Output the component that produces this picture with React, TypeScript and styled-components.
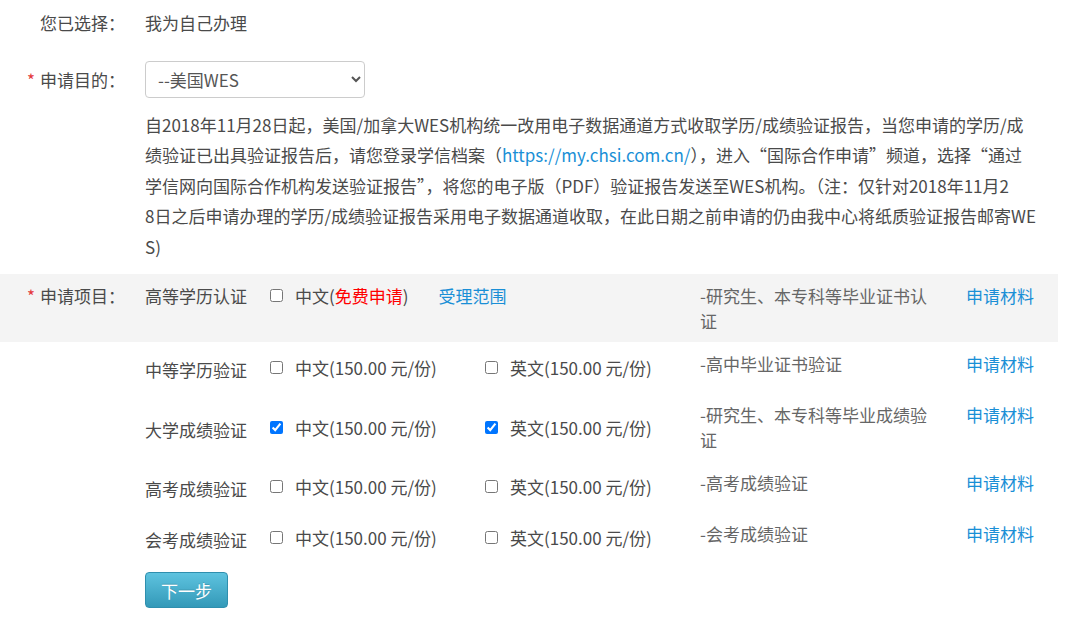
import React, { FC } from 'react';
import styled, { createGlobalStyle } from 'styled-components';

const GlobalStyle = createGlobalStyle`
  body {
    margin: 0;
    background: #fff;
    font-family: "Noto Sans CJK SC", "Liberation Sans", sans-serif;
    font-size: 17px;
    color: #4a4a4a;
  }
`;

const Page = styled.div`
  width: 1058px;
  padding-top: 10px;
`;

const FormLine = styled.div<{ $center?: boolean }>`
  display: grid;
  grid-template-columns: 145px 1fr;
  align-items: ${p => (p.$center ? 'center' : 'start')};
  line-height: 25px;
  margin-bottom: ${p => (p.$center ? '0' : '26px')};
`;

const Label = styled.div<{ $required?: boolean }>`
  padding-left: ${p => (p.$required ? '27px' : '40px')};
  color: #4a4a4a;
  white-space: nowrap;
`;

const Star = styled.span`
  display: inline-block;
  width: 13px;
  color: #e4393c;
`;

const Select = styled.select`
  width: 220px;
  height: 37px;
  padding: 0 8px;
  border: 1px solid #ccc;
  border-radius: 4px;
  background: #fff;
  color: #555;
  font: inherit;
  font-size: 17px;
`;

const Notice = styled.p`
  margin: 12px 0 12px 145px;
  line-height: 30.4px;
  color: #4a4a4a;
  white-space: nowrap;
`;

const Link = styled.a`
  color: #1a8fd6;
  text-decoration: none;
`;

const ItemRow = styled.div<{ $shaded?: boolean }>`
  display: grid;
  grid-template-columns: 145px 125px 215px 215px 266px 92px;
  grid-auto-rows: minmax(33px, auto);
  align-items: ${p => (p.$shaded ? 'start' : 'center')};
  padding: 9px 0;
  line-height: 25px;
  background: ${p => (p.$shaded ? '#f4f4f4' : 'transparent')};
`;

const ItemName = styled.div<{ $low?: boolean }>`
  padding-top: ${p => (p.$low ? '4px' : '0')};
  color: #4a4a4a;
  white-space: nowrap;
`;

const Option = styled.label`
  display: flex;
  align-items: center;
  gap: 12px;
  color: #4a4a4a;
  white-space: nowrap;
`;

const Box = styled.input`
  margin: 0;
  width: 13px;
  height: 13px;
`;

const Free = styled.span`
  color: #f00;
`;

const ScopeLink = styled(Link)`
  margin-left: 30px;
`;

const Desc = styled.div`
  align-self: start;
  width: 236px;
  color: #666;
`;

const MaterialLink = styled(Link)`
  align-self: start;
`;

const NextButton = styled.button`
  margin: 9px 0 0 145px;
  width: 83px;
  height: 36px;
  border: 1px solid #2f8fae;
  border-radius: 4px;
  background: linear-gradient(#5ec3df, #3399b8);
  color: #fff;
  font: inherit;
  font-size: 17px;
  text-shadow: 0 -1px 0 rgba(0, 0, 0, 0.15);
  cursor: pointer;
`;

type Item = {
  name: string;
  checked: boolean;
  desc: string;
};

const items: Item[] = [
  { name: '中等学历验证', checked: false, desc: '-高中毕业证书验证' },
  { name: '大学成绩验证', checked: true, desc: '-研究生、本专科等毕业成绩验证' },
  { name: '高考成绩验证', checked: false, desc: '-高考成绩验证' },
  { name: '会考成绩验证', checked: false, desc: '-会考成绩验证' },
];

const App: FC = () => (
  <Page>
    <GlobalStyle />
    <FormLine>
      <Label>您已选择：</Label>
      <div>我为自己办理</div>
    </FormLine>

    <FormLine $center>
      <Label $required><Star>*</Star>申请目的：</Label>
      <div>
        <Select defaultValue="wes">
          <option value="wes">--美国WES</option>
        </Select>
      </div>
    </FormLine>

    <Notice>
      自2018年11月28日起，美国/加拿大WES机构统一改用电子数据通道方式收取学历/成绩验证报告，当您申请的学历/成<br />
      绩验证已出具验证报告后，请您登录学信档案（<Link href="#">https://my.chsi.com.cn/</Link>），进入“国际合作申请”频道，选择“通过<br />
      学信网向国际合作机构发送验证报告”，将您的电子版（PDF）验证报告发送至WES机构。（注：仅针对2018年11月2<br />
      8日之后申请办理的学历/成绩验证报告采用电子数据通道收取，在此日期之前申请的仍由我中心将纸质验证报告邮寄WE<br />
      S)
    </Notice>

    <ItemRow $shaded>
      <Label $required><Star>*</Star>申请项目：</Label>
      <ItemName>高等学历认证</ItemName>
      <Option style={{ gridColumn: 'span 2' }}>
        <Box type="checkbox" />
        <span>中文(<Free>免费申请</Free>)<ScopeLink href="#">受理范围</ScopeLink></span>
      </Option>
      <Desc>-研究生、本专科等毕业证书认证</Desc>
      <MaterialLink href="#">申请材料</MaterialLink>
    </ItemRow>

    {items.map(item => (
      <ItemRow key={item.name}>
        <div />
        <ItemName $low>{item.name}</ItemName>
        <Option>
          <Box type="checkbox" defaultChecked={item.checked} />
          中文(150.00 元/份)
        </Option>
        <Option>
          <Box type="checkbox" defaultChecked={item.checked} />
          英文(150.00 元/份)
        </Option>
        <Desc>{item.desc}</Desc>
        <MaterialLink href="#">申请材料</MaterialLink>
      </ItemRow>
    ))}

    <NextButton type="button">下一步</NextButton>
  </Page>
);

export default App;
